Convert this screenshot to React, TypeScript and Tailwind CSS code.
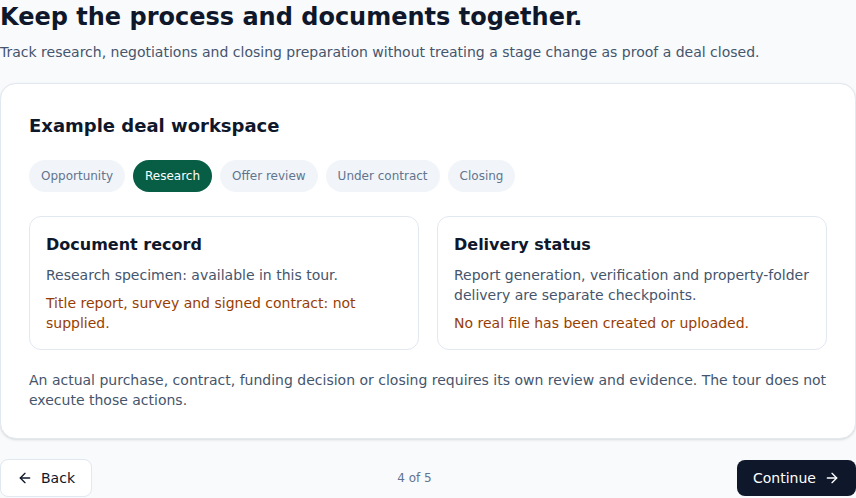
import { ArrowLeft, ArrowRight } from "lucide-react";

const stages = ["Opportunity", "Research", "Offer review", "Under contract", "Closing"];
const activeStage = "Research";

type InfoCardProps = {
  title: string;
  body: string;
  warning: string;
};

function InfoCard({ title, body, warning }: InfoCardProps) {
  return (
    <div className="rounded-xl border border-slate-200 bg-white p-4">
      <h3 className="text-base font-bold leading-6 text-slate-900">{title}</h3>
      <p className="mt-2 text-sm leading-5 text-slate-600">{body}</p>
      <p className="mt-2 text-sm leading-5 text-amber-800">{warning}</p>
    </div>
  );
}

export default function App() {
  return (
    <div
      className="min-h-screen bg-slate-50"
      style={{ fontFamily: '"DejaVu Sans", "Liberation Sans", sans-serif' }}
    >
      <h1 className="text-2xl font-bold leading-[34px] text-slate-900">
        Keep the process and documents together.
      </h1>
      <p className="mt-2 text-sm leading-5 text-slate-600">
        Track research, negotiations and closing preparation without treating a stage change as proof a deal closed.
      </p>

      <section className="mt-[21px] rounded-2xl border border-slate-200 bg-white p-7 shadow-sm">
        <h2 className="text-lg font-bold leading-7 text-slate-900">Example deal workspace</h2>

        <div className="mt-5 flex gap-2">
          {stages.map((stage) => (
            <span
              key={stage}
              className={`rounded-full px-3 py-2 text-xs leading-4 ${
                stage === activeStage ? "bg-[#075e45] text-white" : "bg-slate-100 text-slate-500"
              }`}
            >
              {stage}
            </span>
          ))}
        </div>

        <div className="mt-6 grid grid-cols-2 gap-[18px]">
          <InfoCard
            title="Document record"
            body="Research specimen: available in this tour."
            warning="Title report, survey and signed contract: not supplied."
          />
          <InfoCard
            title="Delivery status"
            body="Report generation, verification and property-folder delivery are separate checkpoints."
            warning="No real file has been created or uploaded."
          />
        </div>

        <p className="mt-5 text-sm leading-5 text-slate-600">
          An actual purchase, contract, funding decision or closing requires its own review and evidence. The tour does not execute those actions.
        </p>
      </section>

      <div className="mt-5 flex items-center justify-between">
        <button className="flex items-center gap-2 rounded-lg border border-slate-200 bg-white px-4 py-2 text-sm leading-5 text-slate-900">
          <ArrowLeft size={16} />
          Back
        </button>
        <span className="text-xs text-slate-500">4 of 5</span>
        <button className="flex items-center gap-2 rounded-lg bg-[#0f172a] px-4 py-2 text-sm leading-5 text-white">
          Continue
          <ArrowRight size={16} />
        </button>
      </div>
    </div>
  );
}
